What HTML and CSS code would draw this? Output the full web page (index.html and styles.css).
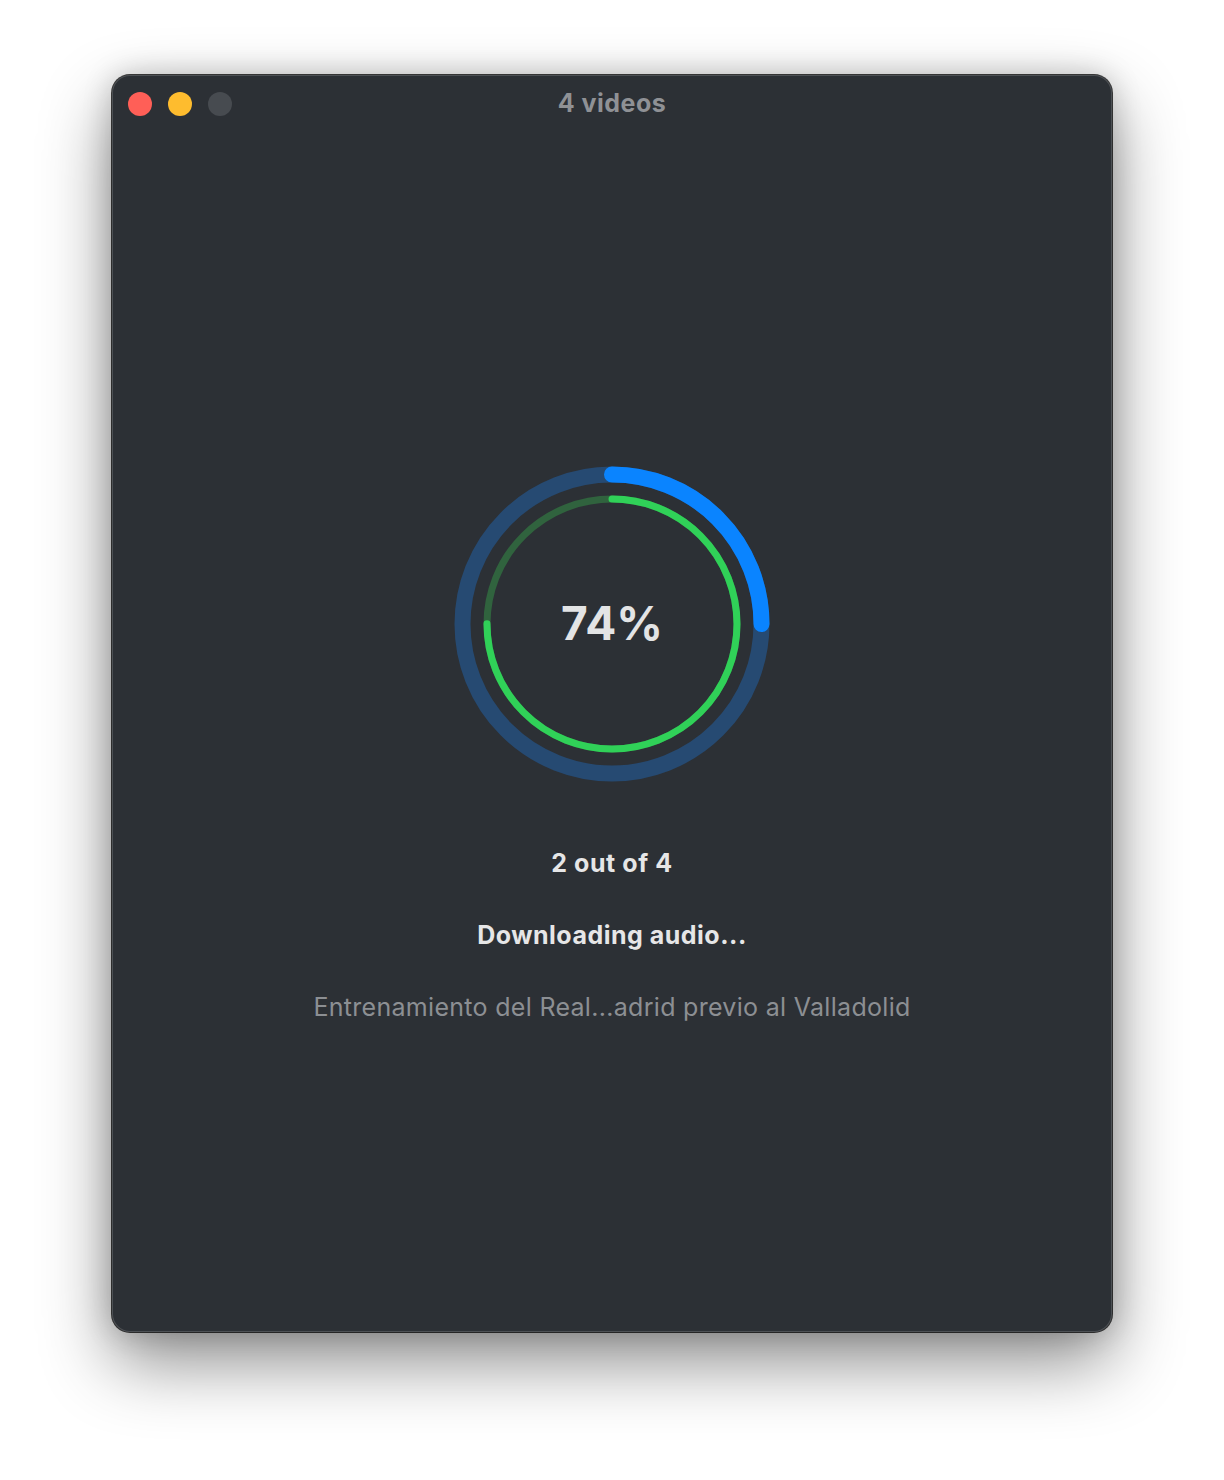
FILE: index.html
```html
<!DOCTYPE html>
<html lang="en">
<head>
  <meta charset="UTF-8" />
  <meta name="viewport" content="width=device-width, initial-scale=1" />
  <title>4 videos</title>
  <link rel="stylesheet" href="styles.css">
</head>
<body>

  <div class="window">
    <header class="titlebar">
      <div class="lights">
        <span class="light red"></span>
        <span class="light yellow"></span>
        <span class="light grey"></span>
      </div>
      <div class="title">4 videos</div>
    </header>

    <main class="content">
      <div class="rings">
        <svg width="320" height="320" viewBox="0 0 320 320">
          <!-- общий прогресс -->
          <circle cx="160" cy="160" r="149.5" fill="none" stroke="#264a72" stroke-width="16" />
          <circle cx="160" cy="160" r="149.5" fill="none" stroke="#0a84ff" stroke-width="16"
                  stroke-linecap="round" stroke-dasharray="234.8 1000" transform="rotate(-90 160 160)" />
          <!-- текущий файл -->
          <circle cx="160" cy="160" r="125" fill="none" stroke="#30633e" stroke-width="7" />
          <circle cx="160" cy="160" r="125" fill="none" stroke="#30d158" stroke-width="7"
                  stroke-linecap="round" stroke-dasharray="589 1000" transform="rotate(-90 160 160)" />
        </svg>
        <div class="percent">74%</div>
      </div>

      <div class="count">2 out of 4</div>
      <div class="status">Downloading audio...</div>
      <div class="filename">Entrenamiento del Real...adrid previo al Valladolid</div>
    </main>
  </div>

</body>
</html>
```

FILE: styles.css
```css
body {
  margin: 0;
  background: #ffffff;
  font-family: Inter, 'Noto Sans', sans-serif;
  padding: 75px 0 0 112px;
  min-height: 1480px;
  box-sizing: border-box;
}

.window {
  width: 1000px;
  height: 1257px;
  background: #2c3035;
  border-radius: 18px;
  box-shadow:
    0 0 0 1px rgba(0, 0, 0, 0.75),
    inset 0 0 0 1px rgba(255, 255, 255, 0.16),
    0 30px 70px rgba(0, 0, 0, 0.45),
    0 0 30px rgba(0, 0, 0, 0.2);
  display: flex;
  flex-direction: column;
  overflow: hidden;
}

.titlebar {
  height: 56px;
  position: relative;
  display: flex;
  align-items: center;
  justify-content: center;
}

.lights {
  position: absolute;
  left: 16px;
  top: 17px;
  display: flex;
  gap: 16px;
}

.light {
  width: 24px;
  height: 24px;
  border-radius: 50%;
}
.light.red { background: #ff5f57; }
.light.yellow { background: #febc2e; }
.light.grey { background: #474b50; }

.title {
  color: #8f9195;
  font-weight: 700;
  font-size: 25px;
  letter-spacing: 0.5px;
}

.content {
  display: flex;
  flex-direction: column;
  align-items: center;
  padding-top: 333px;
}

.rings {
  position: relative;
  width: 320px;
  height: 320px;
}

.rings svg {
  display: block;
}

.percent {
  position: absolute;
  inset: 0;
  display: flex;
  align-items: center;
  justify-content: center;
  color: #e3e4e5;
  font-weight: 700;
  font-size: 46px;
  padding-bottom: 2px;
}

.count,
.status,
.filename {
  font-size: 25px;
  line-height: 30px;
}

.count {
  margin-top: 64px;
  color: #e6e6e7;
  font-weight: 700;
  letter-spacing: 0.6px;
}

.status {
  margin-top: 42px;
  color: #e6e6e7;
  font-weight: 700;
  letter-spacing: 0.5px;
}

.filename {
  margin-top: 42px;
  color: #8c8f93;
  letter-spacing: 0.3px;
}
```
